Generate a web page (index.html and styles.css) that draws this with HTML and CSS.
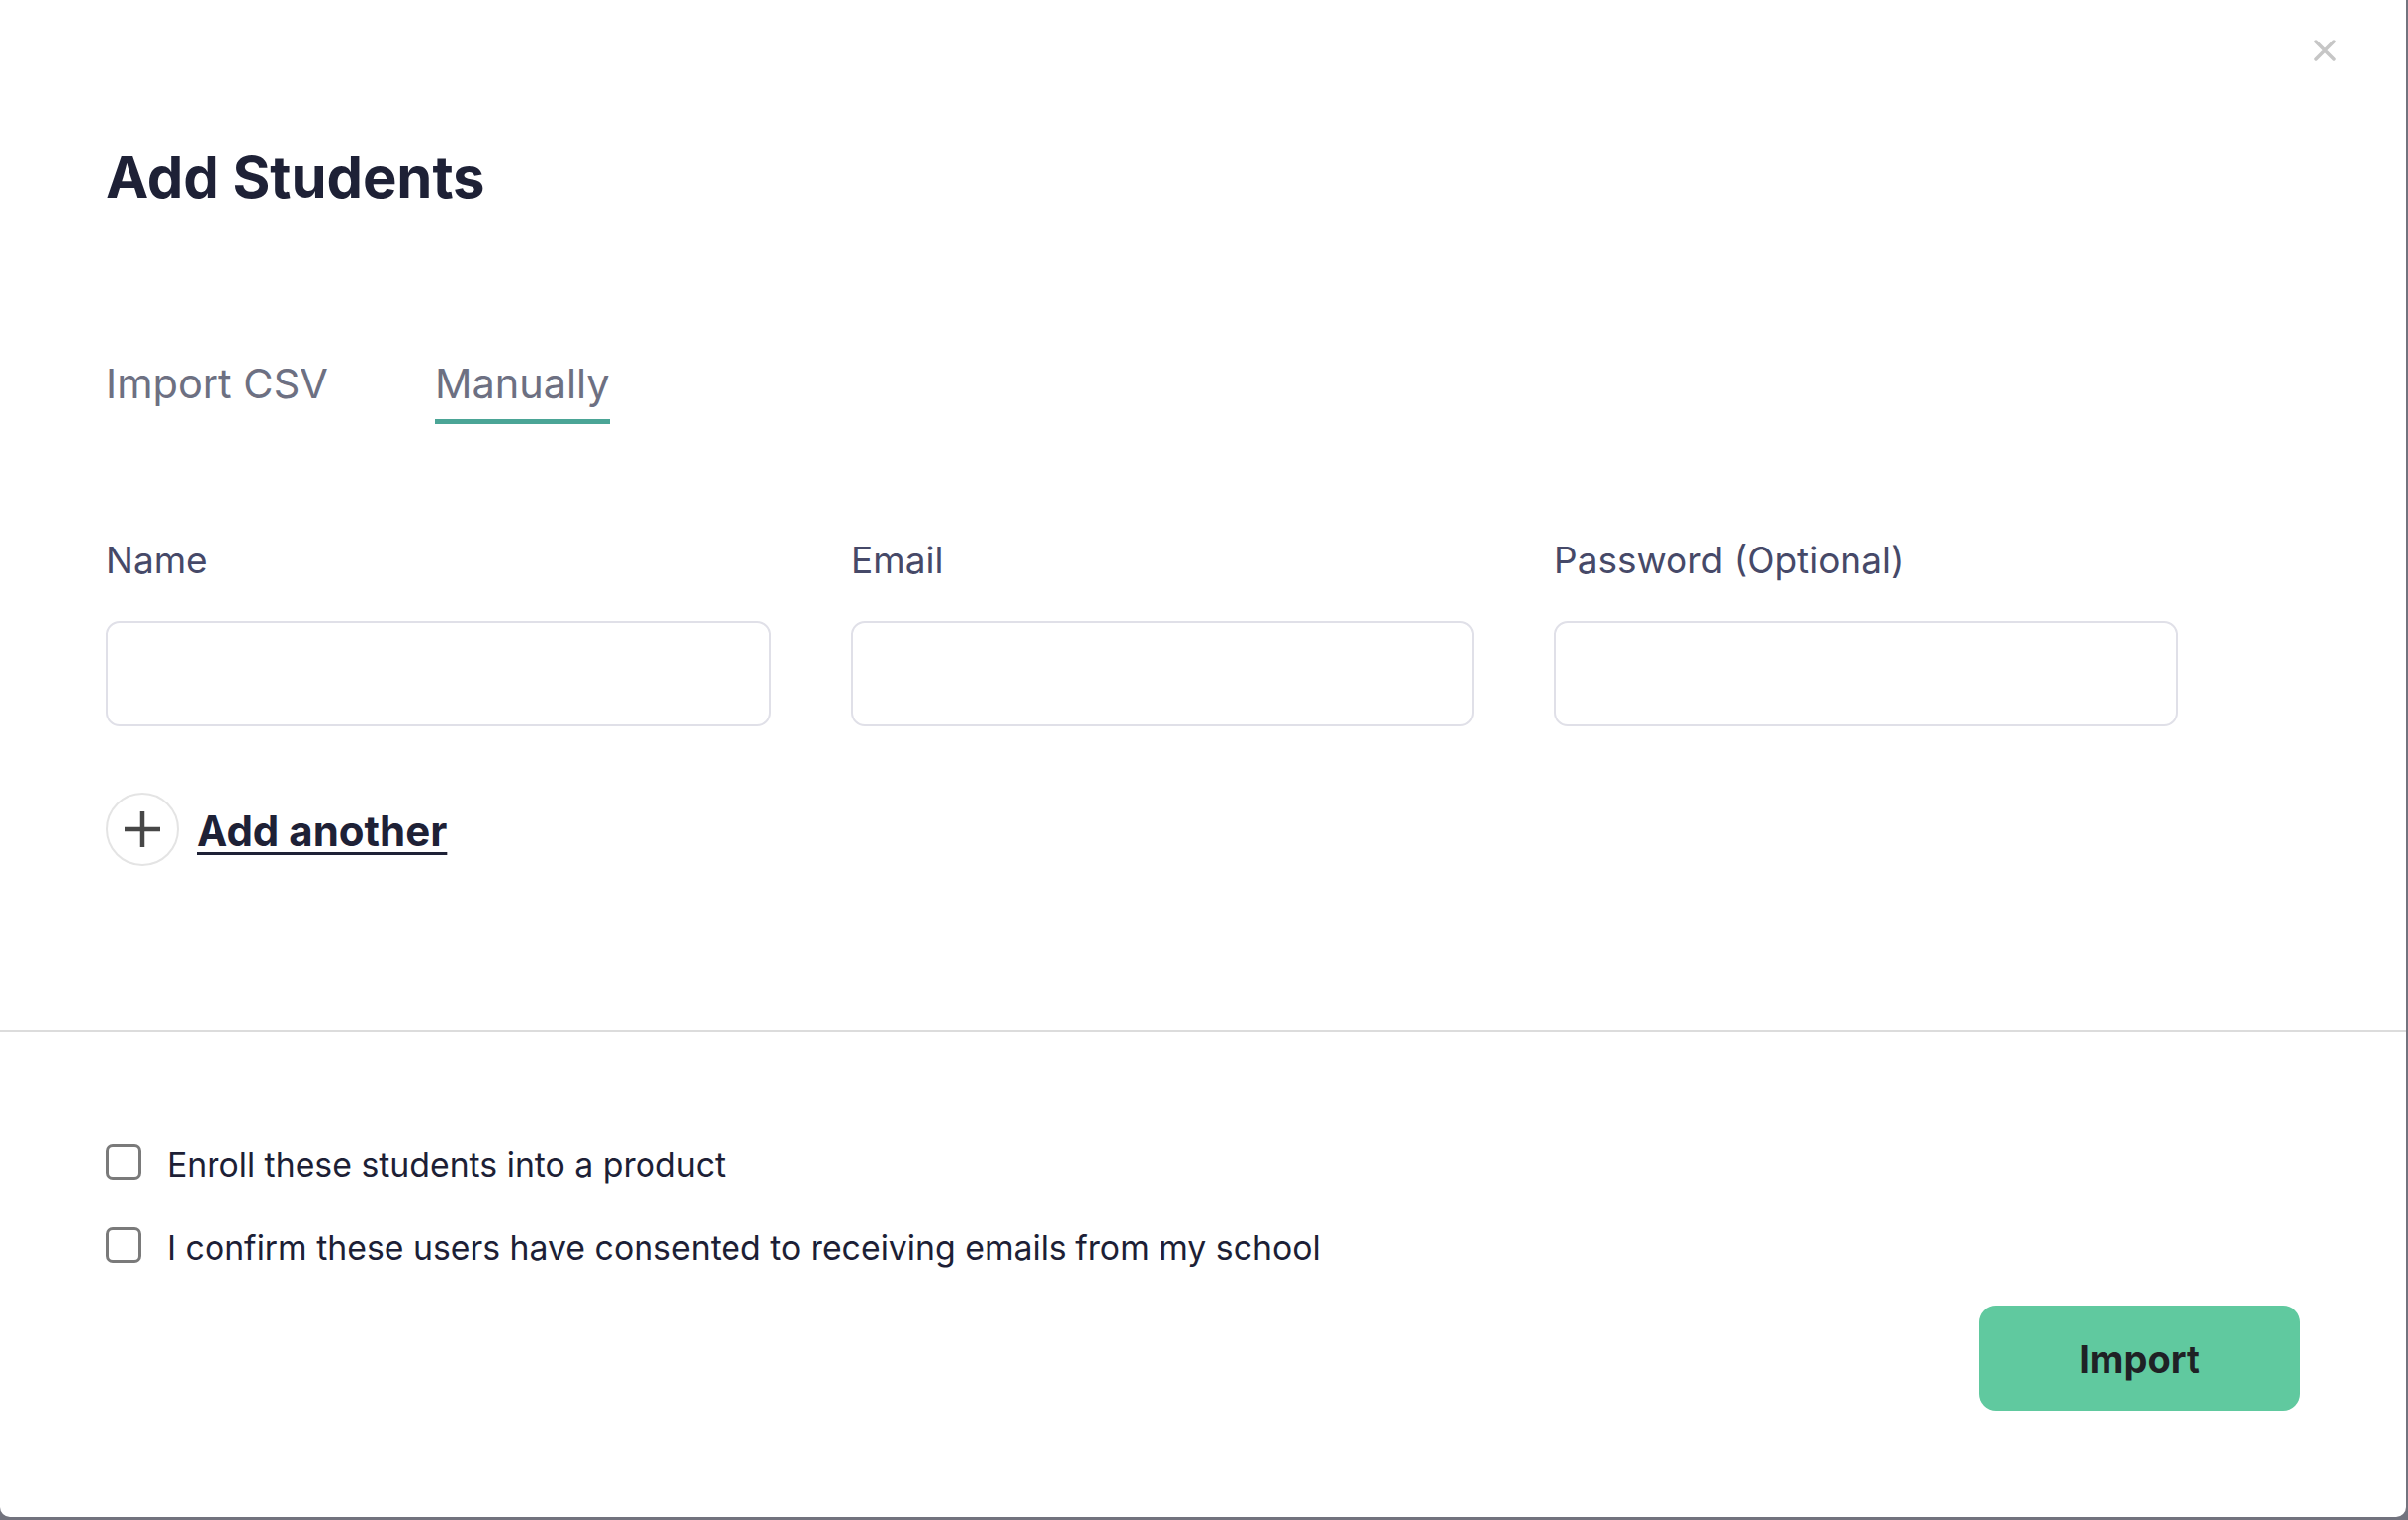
FILE: index.html
```html
<!DOCTYPE html>
<html lang="en">
<head>
<meta charset="utf-8">
<title>Add Students</title>
<link rel="stylesheet" href="styles.css">
</head>
<body>
<div class="modal">
  <button class="close" aria-label="Close">
    <svg viewBox="0 0 22 22" width="22" height="22"><path d="M2 2 L20 20 M20 2 L2 20" stroke="#c6c6c6" stroke-width="3.5" stroke-linecap="round" fill="none"/></svg>
  </button>
  <div class="top">
    <h1 class="title">Add Students</h1>
    <div class="tabs">
      <div class="tab">Import CSV</div>
      <div class="tab active">Manually</div>
    </div>
    <div class="fields">
      <div class="field">
        <label class="label">Name</label>
        <div class="input"></div>
      </div>
      <div class="field">
        <label class="label">Email</label>
        <div class="input"></div>
      </div>
      <div class="field">
        <label class="label">Password (Optional)</label>
        <div class="input"></div>
      </div>
    </div>
    <div class="add-row">
      <span class="plus">
        <svg viewBox="0 0 38 38" width="38" height="38"><path d="M19 1 V37 M1 19 H37" stroke="#474747" stroke-width="4.5" fill="none"/></svg>
      </span>
      <span class="add-text">Add another</span>
    </div>
  </div>
  <div class="divider"></div>
  <div class="bottom">
    <div class="check-row">
      <span class="checkbox"></span>
      <span class="check-text">Enroll these students into a product</span>
    </div>
    <div class="check-row second">
      <span class="checkbox"></span>
      <span class="check-text">I confirm these users have consented to receiving emails from my school</span>
    </div>
    <div class="actions">
      <button class="import">Import</button>
    </div>
  </div>
</div>
</body>
</html>
```
FILE: styles.css
```css
html, body {
  margin: 0;
  padding: 0;
}
body {
  background: #72737e;
  width: 2436px;
  height: 1538px;
  overflow: hidden;
  font-family: Inter, "Noto Sans", "Liberation Sans", sans-serif;
}
.modal {
  position: relative;
  width: 2434px;
  height: 1535px;
  background: #ffffff;
  border-radius: 0 0 10px 10px;
  box-sizing: border-box;
  padding-top: 144px;
  padding-bottom: 107px;
  display: flex;
  flex-direction: column;
}
.close {
  position: absolute;
  top: 40px;
  right: 71px;
  width: 22px;
  height: 22px;
  padding: 0;
  border: 0;
  background: none;
  display: block;
}
.close svg { display: block; }
.top {
  padding: 0 107px;
  display: flex;
  flex-direction: column;
}
.title {
  margin: 0;
  font-size: 58px;
  line-height: 70px;
  font-weight: 700;
  color: #1e2136;
  letter-spacing: -0.1px;
}
.tabs {
  margin-top: 149px;
  display: flex;
  gap: 108px;
}
.tab {
  font-size: 41.5px;
  line-height: 50px;
  color: #6d7082;
  padding-bottom: 11px;
  border-bottom: 5px solid transparent;
}
.tab.active {
  border-bottom-color: #4ba596;
}
.fields {
  margin-top: 117px;
  display: grid;
  grid-template-columns: 673px 630px 631px;
  column-gap: 81px;
}
.field {
  display: flex;
  flex-direction: column;
}
.label {
  font-size: 37px;
  line-height: 42px;
  color: #464968;
}
.input {
  margin-top: 40px;
  height: 107px;
  box-sizing: border-box;
  border: 2px solid #e0e0e8;
  border-radius: 14px;
}
.add-row {
  margin-top: 67px;
  display: flex;
  align-items: center;
  gap: 18px;
}
.plus {
  width: 74px;
  height: 74px;
  box-sizing: border-box;
  border: 2px solid #e4e4e4;
  border-radius: 50%;
  display: flex;
  align-items: center;
  justify-content: center;
}
.plus svg { display: block; }
.add-text {
  font-size: 42px;
  line-height: 50px;
  font-weight: 700;
  color: #1e2136;
  text-decoration: underline;
  text-decoration-thickness: 3px;
  text-underline-offset: 6px;
  margin-top: 4px;
}
.divider {
  margin-top: 166px;
  height: 0;
  border-top: 2px solid #dcdcdc;
}
.bottom {
  padding: 114px 107px 0;
  display: flex;
  flex-direction: column;
}
.check-row {
  display: flex;
  align-items: center;
  gap: 26px;
  height: 36px;
}
.check-row.second {
  margin-top: 48px;
}
.checkbox {
  width: 36px;
  height: 36px;
  box-sizing: border-box;
  border: 3px solid #7a7a7a;
  border-radius: 7px;
  flex: none;
}
.check-text {
  font-size: 33.8px;
  line-height: 38px;
  color: #1d1f36;
  margin-top: 6px;
}
.actions {
  margin-top: 43px;
  display: flex;
  justify-content: flex-end;
}
.import {
  width: 325px;
  height: 107px;
  border: 0;
  border-radius: 17px;
  background: #60c99f;
  color: #1f2125;
  font-family: Inter, "Noto Sans", "Liberation Sans", sans-serif;
  font-size: 38px;
  font-weight: 700;
  padding: 0;
}
```
